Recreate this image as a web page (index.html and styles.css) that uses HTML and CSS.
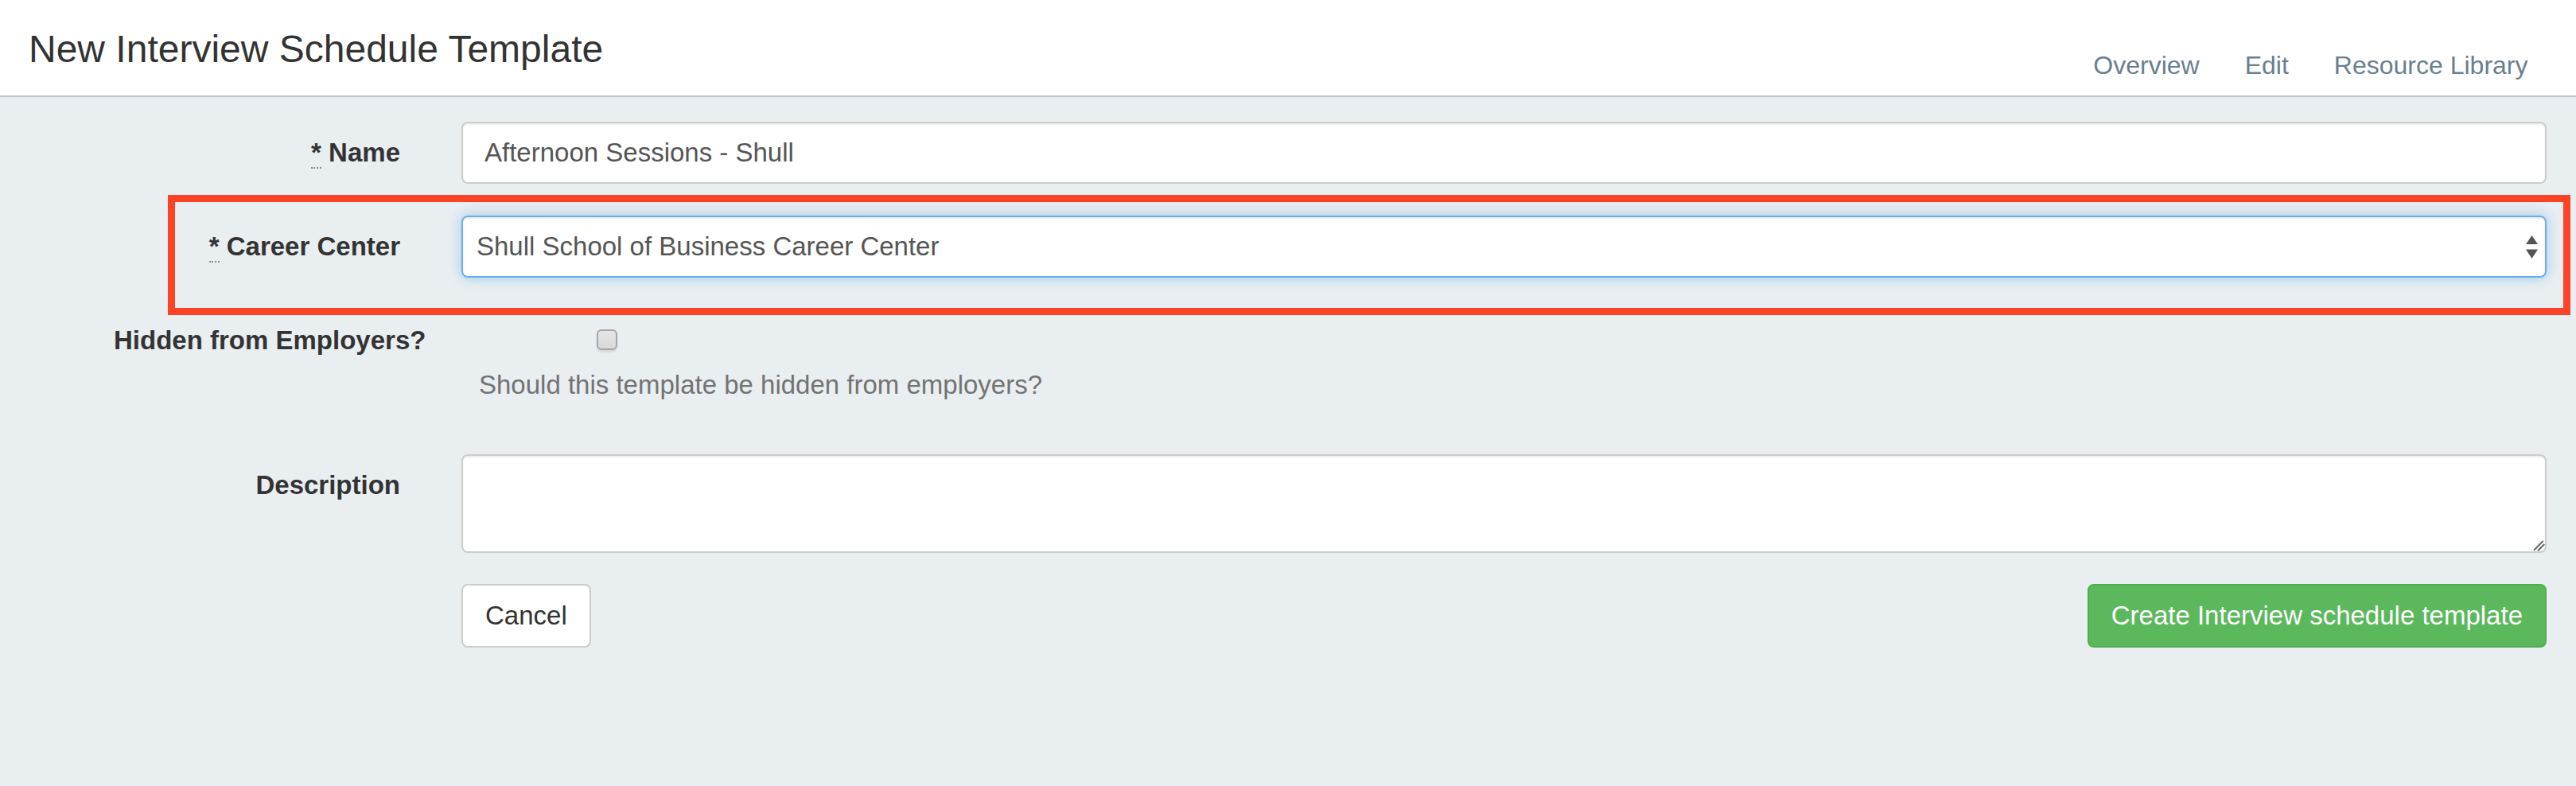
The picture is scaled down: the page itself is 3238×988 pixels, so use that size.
FILE: index.html
```html
<!DOCTYPE html>
<html lang="en">
<head>
<meta charset="utf-8">
<title>New Interview Schedule Template</title>
<link rel="stylesheet" href="styles.css">
</head>
<body>
<header class="page-header">
  <h1 class="page-title">New Interview Schedule Template</h1>
  <nav class="page-nav">
    <a href="#" class="nav-link">Overview</a>
    <a href="#" class="nav-link">Edit</a>
    <a href="#" class="nav-link">Resource Library</a>
  </nav>
</header>
<main class="form-wrap">
  <div class="annotation"></div>
  <form class="form">
    <div class="form-group">
      <label class="form-label" for="name"><abbr class="req" title="required">*</abbr> Name</label>
      <div class="form-field">
        <input id="name" class="text-input" type="text" value="Afternoon Sessions - Shull">
      </div>
    </div>
    <div class="form-group">
      <label class="form-label" for="center"><abbr class="req" title="required">*</abbr> Career Center</label>
      <div class="form-field select-wrap">
        <select id="center" class="select-input">
          <option>Shull School of Business Career Center</option>
        </select>
        <svg class="select-arrows" width="15" height="29" viewBox="0 0 15 29"><path d="M7.5 0 L15 11 L0 11 Z"/><path d="M0 17.5 L15 17.5 L7.5 29 Z"/></svg>
      </div>
    </div>
    <div class="form-group group-hidden">
      <label class="form-label label-nowrap" for="hidden">Hidden from Employers?</label>
      <div class="form-field">
        <input id="hidden" class="check-input" type="checkbox">
        <p class="help-text">Should this template be hidden from employers?</p>
      </div>
    </div>
    <div class="form-group group-desc">
      <label class="form-label" for="desc">Description</label>
      <div class="form-field textarea-wrap">
        <textarea id="desc" class="textarea-input"></textarea>
        <svg class="resize-handle" width="16" height="16" viewBox="0 0 16 16"><path d="M2 13.7 L13.7 2 M7 14.3 L15.3 6"/></svg>
      </div>
    </div>
    <div class="form-group group-actions">
      <div class="form-label"></div>
      <div class="form-field actions">
        <button type="button" class="btn btn-default">Cancel</button>
        <button type="submit" class="btn btn-success">Create Interview schedule template</button>
      </div>
    </div>
  </form>
</main>
</body>
</html>
```
FILE: styles.css
```css
* { box-sizing: border-box; }

html, body {
  margin: 0;
  padding: 0;
}

body {
  background: #e9eef1;
  font-family: "Liberation Sans", Arial, Helvetica, sans-serif;
  font-size: 33px;
  color: #333;
  min-height: 988px;
}

.page-header {
  display: flex;
  justify-content: space-between;
  align-items: flex-start;
  height: 122px;
  background: #fff;
  border-bottom: 2px solid #b7c5cd;
  padding-left: 36px;
}

.page-title {
  margin: 38px 0 0;
  font-size: 48px;
  line-height: 48px;
  font-weight: 400;
  color: #333;
}

.page-nav {
  display: flex;
  margin-top: 62px;
  padding-right: 32px;
}

.nav-link {
  font-size: 32px;
  line-height: 40px;
  padding: 0 28.5px;
  color: #6a7f90;
  text-decoration: none;
}

.form-wrap {
  position: relative;
  padding: 31px 37px 0 143px;
}

.annotation {
  position: absolute;
  left: 211px;
  top: 123px;
  width: 3020px;
  height: 151px;
  border: 9px solid #fc4325;
  pointer-events: none;
}

.form-group {
  display: grid;
  grid-template-columns: 360px 1fr;
  column-gap: 77px;
  margin-bottom: 40px;
}

.form-label {
  display: block;
  padding-top: 19px;
  line-height: 40px;
  font-weight: 700;
  text-align: right;
  color: #333;
  white-space: nowrap;
}

.req {
  text-decoration: none;
  border-bottom: 2px dotted #8a8a8a;
  cursor: help;
}

.form-field {
  position: relative;
}

.text-input,
.select-input {
  display: block;
  width: 100%;
  height: 78px;
  margin: 0;
  border: 2px solid #ccc;
  border-radius: 8px;
  background: #fff;
  font-family: inherit;
  font-size: 33px;
  line-height: 74px;
  color: #555;
  padding: 0 27px;
  box-shadow: inset 0 2px 2px rgba(0, 0, 0, 0.075);
  outline: none;
}

.select-input {
  -webkit-appearance: none;
  appearance: none;
  padding: 0 50px 0 17px;
  border-color: #66afe9;
  box-shadow: inset 0 2px 2px rgba(0, 0, 0, 0.075), 0 0 16px rgba(102, 175, 233, 0.6);
}

.select-arrows {
  position: absolute;
  right: 11px;
  top: 25px;
  fill: #555;
  pointer-events: none;
}

.group-hidden {
  margin-bottom: 67px;
}

.check-input {
  -webkit-appearance: none;
  appearance: none;
  display: block;
  width: 26px;
  height: 26px;
  margin: 25px 0 0 170px;
  border: 2px solid #a6a6a6;
  border-radius: 6px;
  background: linear-gradient(#e6e6e6, #d8d8d8);
  box-shadow: 0 3px 2px rgba(0, 0, 0, 0.08);
}

.help-text {
  margin: 24px 0 0 22px;
  line-height: 40px;
  color: #737373;
}

.group-desc {
  margin-bottom: 39px;
}

.textarea-input {
  display: block;
  width: 100%;
  height: 124px;
  margin: 0;
  border: 2px solid #ccc;
  border-radius: 8px;
  background: #fff;
  font-family: inherit;
  font-size: 33px;
  color: #555;
  padding: 12px 27px;
  resize: none;
  box-shadow: inset 0 2px 2px rgba(0, 0, 0, 0.075);
  outline: none;
}

.resize-handle {
  position: absolute;
  right: 2px;
  bottom: 1px;
  stroke: #666;
  stroke-width: 2;
  fill: none;
}

.actions {
  display: flex;
  justify-content: space-between;
  align-items: flex-start;
}

.btn {
  height: 80px;
  padding: 0 28px;
  border: 2px solid transparent;
  border-radius: 8px;
  font-family: inherit;
  font-size: 33px;
  line-height: 76px;
  cursor: pointer;
}

.btn-default {
  background: #fff;
  border-color: #ccc;
  color: #333;
}

.btn-success {
  background: #5cb85c;
  border-color: #4cae4c;
  color: #fff;
}
```
